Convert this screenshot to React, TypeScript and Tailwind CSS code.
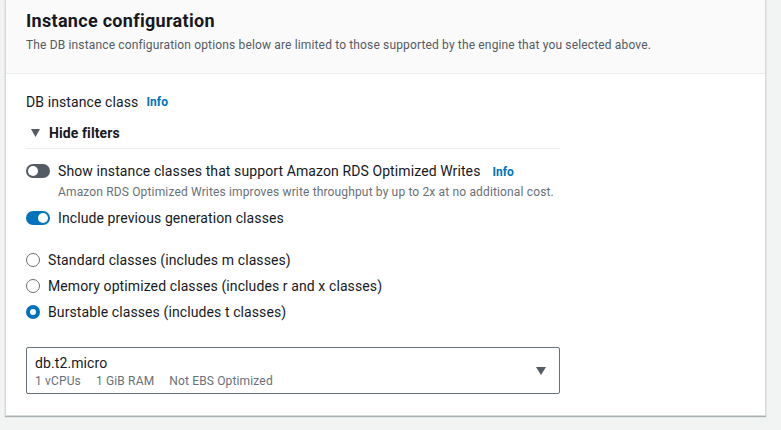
import React from "react";

const font = { fontFamily: "Roboto, 'Noto Sans', Arial, sans-serif" };

const Toggle = ({ on }: { on: boolean }) => (
  <span
    className={
      "relative inline-flex h-[14px] w-[24px] shrink-0 items-center rounded-full " +
      (on ? "bg-[#0073bb]" : "bg-[#545b64]")
    }
  >
    <span
      className={
        "absolute top-[2px] h-[10px] w-[10px] rounded-full bg-white " +
        (on ? "left-[12px]" : "left-[2px]")
      }
    />
  </span>
);

const Radio = ({ checked, label }: { checked?: boolean; label: string }) => (
  <label className="flex h-[20px] items-center gap-[8px] text-[14px] leading-[20px] tracking-[0.1px] text-[#16191f]">
    {checked ? (
      <span className="flex h-[14px] w-[14px] items-center justify-center rounded-full bg-[#0073bb]">
        <span className="h-[6px] w-[6px] rounded-full bg-white" />
      </span>
    ) : (
      <span className="h-[14px] w-[14px] rounded-full border-[1.5px] border-[#687078] bg-white" />
    )}
    <span>{label}</span>
  </label>
);

const Info = () => (
  <span className="text-[12px] font-bold leading-[20px] text-[#0073bb]">Info</span>
);

export default function App() {
  return (
    <div className="h-[430px] w-full overflow-hidden bg-[#f2f3f3] pl-[5px] pr-[15px]" style={font}>
      <div className="w-[761px] border-x border-b border-[#d5dbdb] bg-white shadow-[0_1px_1px_0_rgba(0,28,36,0.3)]">
        <div className="h-[74px] border-b border-[#eaeded] bg-[#fafafa] px-[20px] pt-[10px]">
          <h2 className="text-[18px] font-bold leading-[22px] tracking-[0.3px] text-[#16191f]">
            Instance configuration
          </h2>
          <p className="mt-[5px] text-[12px] leading-[16px] tracking-[0.15px] text-[#545b64]">
            The DB instance configuration options below are limited to those supported by the engine
            that you selected above.
          </p>
        </div>

        <div className="px-[20px] pb-[21px] pt-[18px]">
          <div className="flex items-center gap-[8px] text-[14px] leading-[20px] tracking-[0.1px] text-[#16191f]">
            <span>DB instance class</span>
            <Info />
          </div>

          <div className="w-[534px]">
            <div className="mt-[11px] flex items-center gap-[9px] border-b border-[#eaeded] pb-[5px] pl-[5px]">
              <svg width="9" height="8" viewBox="0 0 9 8" className="shrink-0">
                <path d="M0 0h9L4.5 8z" fill="#545b64" />
              </svg>
              <span className="text-[14px] font-bold leading-[20px] tracking-[0.1px] text-[#16191f]">
                Hide filters
              </span>
            </div>

            <div className="mt-[10px] flex items-center gap-[8px]">
              <Toggle on={false} />
              <span className="text-[14px] leading-[20px] tracking-[0.1px] text-[#16191f]">
                Show instance classes that support Amazon RDS Optimized Writes
              </span>
              <span className="ml-[4px]">
                <Info />
              </span>
            </div>
            <p className="ml-[32px] mt-[1px] text-[12px] leading-[16px] tracking-[0.15px] text-[#687078]">
              Amazon RDS Optimized Writes improves write throughput by up to 2x at no additional cost.
            </p>

            <div className="mt-[8px] flex items-center gap-[8px]">
              <Toggle on />
              <span className="text-[14px] leading-[20px] tracking-[0.1px] text-[#16191f]">
                Include previous generation classes
              </span>
            </div>

            <div className="mt-[22px] flex flex-col gap-[6px]">
              <Radio label="Standard classes (includes m classes)" />
              <Radio label="Memory optimized classes (includes r and x classes)" />
              <Radio checked label="Burstable classes (includes t classes)" />
            </div>

            <div className="mt-[25px] flex h-[47px] items-center justify-between rounded-[2px] border border-[#687078] bg-white pl-[8px] pr-[13px]">
              <div>
                <div className="text-[14px] leading-[20px] tracking-[0.1px] text-[#16191f]">db.t2.micro</div>
                <div className="flex gap-[15px] text-[12px] leading-[16px] tracking-[0.15px] text-[#687078]">
                  <span>1 vCPUs</span>
                  <span>1 GiB RAM</span>
                  <span>Not EBS Optimized</span>
                </div>
              </div>
              <svg width="10" height="8" viewBox="0 0 10 8" className="shrink-0">
                <path d="M0 0h10L5 8z" fill="#545b64" />
              </svg>
            </div>
          </div>
        </div>
      </div>
    </div>
  );
}
